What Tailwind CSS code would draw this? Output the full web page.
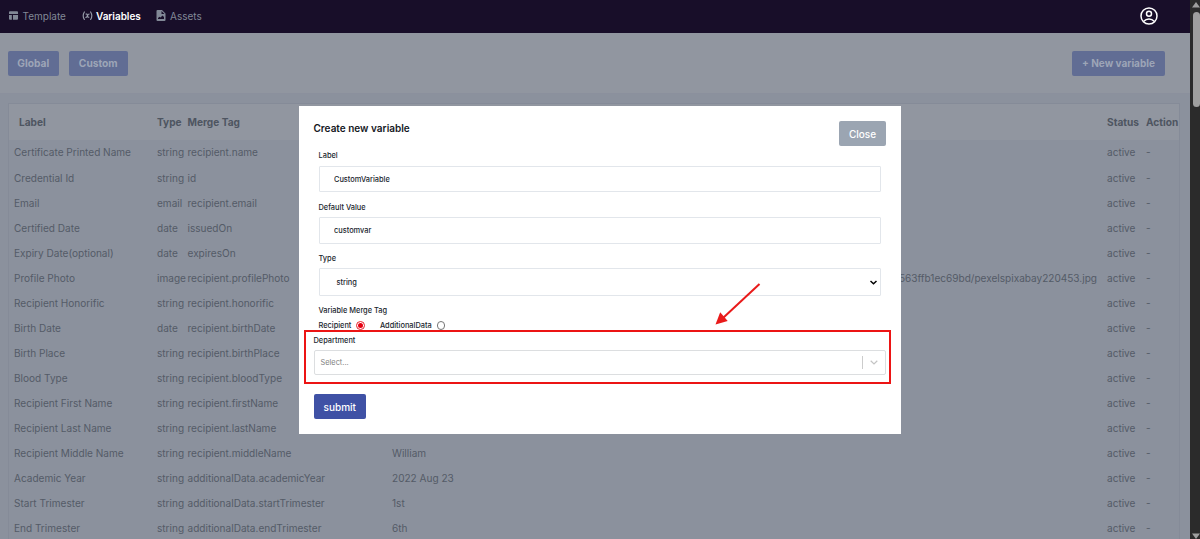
<!DOCTYPE html>
<html lang="en">
<head>
    <meta charset="UTF-8" />
    <meta name="viewport" content="width=device-width, initial-scale=1" />
    <title>Variables</title>
    <script src="https://cdn.jsdelivr.net/npm/@tailwindcss/browser@4"></script>
</head>

<body class="relative flex h-[539px] w-[1200px] overflow-hidden bg-[#8b919d] font-['Inter',sans-serif] text-[10px] leading-none">

<div class="flex h-full w-[1190px] flex-col overflow-hidden">

    <!-- Navbar -->
    <nav class="flex h-[33px] shrink-0 items-center bg-[#180e29] pr-[32px] pb-[2px] pl-[9px] text-[#818896]">
        <a class="flex w-[72.500px] items-center gap-[4px]">
            <svg class="h-[9px] w-[9.500px]" viewBox="0 0 10 9" fill="currentColor"><path d="M1 0h7.500a1 1 0 0 1 1 1v2H0V1a1 1 0 0 1 1-1zM0 4h3v5H1a1 1 0 0 1-1-1zM4.200 4h5.300v4a1 1 0 0 1-1 1H4.200z"/></svg>
            <span class="pt-px">Template</span>
        </a>
        <a class="flex w-[74.500px] items-center gap-[3.500px] font-semibold text-white tracking-[-0.05px]">
            <svg class="h-[9.500px] w-[11px]" viewBox="0 0 11 10" fill="none" stroke="#989eab" stroke-width="1.200" stroke-linecap="round"><path d="M2.200 1Q-.3 5 2.200 9M8.800 1Q11.300 5 8.800 9M4 3.200q.9-.3 1.200.8l.5 1.900q.3.900 1.200.6M7.200 3.200Q6.300 3.200 5.500 5T3.800 6.700"/></svg>
            <span class="pt-px">Variables</span>
        </a>
        <a class="flex items-center gap-[4px]">
            <svg class="h-[11px] w-[10px]" viewBox="0 0 10 11" fill="currentColor" fill-rule="evenodd"><path d="M1.500 0H6l3.500 3.500V10a1 1 0 0 1-1 1h-7a1 1 0 0 1-1-1V1a1 1 0 0 1 1-1zM5.500 1v3h3zM2 9h6V7L6.500 5.500 4.500 7.500 3.500 6.700 2 8z"/></svg>
            <span class="pt-px">Assets</span>
        </a>
        <svg class="ml-auto h-[18px] w-[18px]" viewBox="0 0 18 18" fill="none" stroke="#fff" stroke-width="1.500"><circle cx="9" cy="9" r="8"/><circle cx="9" cy="6.800" r="2.500"/><path d="M3.500 14.500Q6 12 9 12t5.500 2.500"/></svg>
    </nav>

    <!-- Toolbar -->
    <div class="flex h-[61px] shrink-0 items-center gap-[10px] border-b border-[#8b909d] bg-[#9196a0] pr-[25px] pl-[7.500px] font-bold text-[#9da5b7]">
        <button class="h-[25px] w-[51.500px] rounded-[2px] bg-[#616d94] pt-px text-[10.200px]">Global</button>
        <button class="h-[25px] w-[58.500px] rounded-[2px] bg-[#616d94] pt-px text-[10.200px]">Custom</button>
        <button class="ml-auto h-[25px] w-[93px] rounded-[2px] bg-[#616d94]">+ New variable</button>
    </div>

    <!-- Variables table -->
    <div class="mt-[9px] mr-[10px] ml-[8px] flex-1 border border-[#858b98] text-[#545b67]">
        <div class="grid h-[36px] grid-cols-[143px_30.500px_204.500px_715px_39px_1fr] items-center bg-[#9196a0] pl-[5px] text-[10.150px] font-bold text-[#4e5561]">
            <span class="pl-[5px]">Label</span>
            <span>Type</span>
            <span>Merge Tag</span>
            <span></span>
            <span>Status</span>
            <span>Action</span>
        </div>
        <div id="rows"></div>
    </div>
</div>

<!-- Scrollbar -->
<div class="flex h-full w-[10px] flex-col items-center bg-[#2b2b2b]">
    <svg class="mt-[2px] ml-[2px] h-[6px] w-[8px]" viewBox="0 0 8 6" fill="#9f9f9f"><path d="M4 0l4 5.500H0z"/></svg>
    <div class="mt-[4px] ml-[2px] h-[95px] w-[7px] rounded-full bg-[#9f9f9f]"></div>
    <svg class="mt-auto ml-[2px] h-[6px] w-[8px]" viewBox="0 0 8 6" fill="#9f9f9f"><path d="M4 6l4-5.500H0z"/></svg>
</div>

<!-- Create variable dialog -->
<div class="absolute top-[106px] left-[299px] flex h-[328px] w-[602px] flex-col bg-white pt-[15px] pr-[15px] pl-[14.500px] text-[7.400px] font-medium text-[#20252d]">
    <div class="flex h-[25px] shrink-0 justify-between">
        <h2 class="pt-[2px] text-[10px] font-semibold text-[#15181e]">Create new variable</h2>
        <button class="h-[25px] w-[47px] rounded-[2px] bg-[#9ba5b2] text-[10px] text-white">Close</button>
    </div>

    <div class="flex flex-col px-[5px]">
        <label class="mt-[6px] h-[8px]">Label</label>
        <input type="text" value="CustomVariable" class="mt-[5.500px] h-[26.500px] rounded-[1px] border border-[#e2e6eb] px-[14.500px] pt-px" />
        <label class="mt-[11px] h-[8px] pt-px">Default Value</label>
        <input type="text" value="customvar" class="mt-[6px] h-[27px] rounded-[1px] border border-[#e2e6eb] px-[14.500px]" />
        <label class="mt-[11px] h-[8px]">Type</label>
        <div class="mt-[5px] flex h-[27.500px] items-center justify-between rounded-[1px] border border-[#e2e6eb] pt-px pr-[3px] pl-[17px]">
            string
            <svg class="h-[5px] w-[7px]" viewBox="0 0 7 5" fill="none" stroke="#000" stroke-width="1.500"><path d="M.5 1l3 2.700 3-2.700"/></svg>
        </div>
        <label class="mt-[11px] h-[8px]">Variable Merge Tag</label>
        <div class="mt-[6.500px] flex h-[9px] items-center">
            Recipient
            <span class="ml-[5px] flex h-[8.500px] w-[8.500px] items-center justify-center rounded-full border border-[#e8202a]"><span class="h-[4.500px] w-[4.500px] rounded-full bg-[#e60012]"></span></span>
            <span class="ml-[15px]">AdditionalData</span>
            <span class="ml-[5px] h-[8.500px] w-[8.500px] rounded-full border border-[#777]"></span>
        </div>
    </div>

    <label class="mt-[7px] h-[8px]">Department</label>
    <div class="mt-[5px] flex h-[25px] shrink-0 items-center rounded-[2px] border border-[#dcdee0] pl-[6px] font-normal text-[#808080]">
        Select...
        <span class="ml-auto h-[13px] w-px bg-[#ccc]"></span>
        <svg class="mx-[7px] h-[5px] w-[8px]" viewBox="0 0 8 5" fill="none" stroke="#c4c4c4" stroke-width="1.200"><path d="M.7.800L4 4 7.300.800"/></svg>
    </div>
    <button class="mt-[18.500px] h-[25px] w-[52.500px] shrink-0 rounded-[2px] bg-[#3f51a5] pt-px text-[10px] text-white">submit</button>
</div>

<!-- Highlight around the department field -->
<div class="absolute top-[330px] left-[304px] h-[54px] w-[587px] border-2 border-[#ec1414]"></div>
<svg class="absolute top-[280px] left-[710px] h-[48px] w-[54px]" viewBox="0 0 54 48"><path d="M49.500 4L13 38" stroke="#e91a1a" stroke-width="2"/><path d="M5.500 44.500l4.700-12.200 7.500 8.700z" fill="#e91a1a"/></svg>

<script>
    const variables = [
        ["Certificate Printed Name", "string", "recipient.name", ""],
        ["Credential Id", "string", "id", ""],
        ["Email", "email", "recipient.email", ""],
        ["Certified Date", "date", "issuedOn", ""],
        ["Expiry Date(optional)", "date", "expiresOn", ""],
        ["Profile Photo", "image", "recipient.profilePhoto", "563ffb1ec69bd/pexelspixabay220453.jpg"],
        ["Recipient Honorific", "string", "recipient.honorific", ""],
        ["Birth Date", "date", "recipient.birthDate", ""],
        ["Birth Place", "string", "recipient.birthPlace", ""],
        ["Blood Type", "string", "recipient.bloodType", ""],
        ["Recipient First Name", "string", "recipient.firstName", ""],
        ["Recipient Last Name", "string", "recipient.lastName", ""],
        ["Recipient Middle Name", "string", "recipient.middleName", "William"],
        ["Academic Year", "string", "additionalData.academicYear", "2022 Aug 23"],
        ["Start Trimester", "string", "additionalData.startTrimester", "1st"],
        ["End Trimester", "string", "additionalData.endTrimester", "6th"]
    ];

    document.getElementById("rows").innerHTML = variables.map(([label, type, tag, value]) => `
        <div class="grid h-[25.040px] grid-cols-[143px_30.500px_204.500px_715px_39px_1fr] items-center pl-[5px] text-[10.050px] whitespace-nowrap">
            <span>${label}</span>
            <span>${type}</span>
            <span>${tag}</span>
            <span class="${value.endsWith(".jpg") ? "pr-[10px] text-right" : ""}">${value}</span>
            <span>active</span>
            <span>-</span>
        </div>`).join("");
</script>

</body>
</html>
